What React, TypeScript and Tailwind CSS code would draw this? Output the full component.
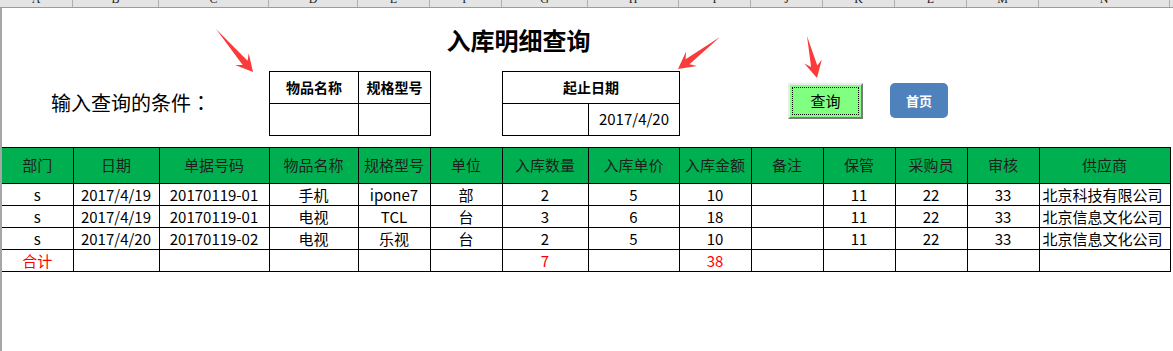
import React from 'react'

const LETTERS = ['A', 'B', 'C', 'D', 'E', 'F', 'G', 'H', 'I', 'J', 'K', 'L', 'M', 'N']

const HEADERS = ['部门', '日期', '单据号码', '物品名称', '规格型号', '单位', '入库数量', '入库单价', '入库金额', '备注', '保管', '采购员', '审核', '供应商']

const WIDTHS = [71, 86, 110, 89, 72, 72, 86, 91, 72, 72, 72, 72, 72, 131]

const ROWS = [
  ['s', '2017/4/19', '20170119-01', '手机', 'ipone7', '部', '2', '5', '10', '', '11', '22', '33', '北京科技有限公司'],
  ['s', '2017/4/19', '20170119-01', '电视', 'TCL', '台', '3', '6', '18', '', '11', '22', '33', '北京信息文化公司'],
  ['s', '2017/4/20', '20170119-02', '电视', '乐视', '台', '2', '5', '10', '', '11', '22', '33', '北京信息文化公司'],
]

const TOTAL = ['合计', '', '', '', '', '', '7', '', '38', '', '', '', '', '']

// red annotation arrow, tail -> tip
function Arrow({ x1, y1, x2, y2 }: { x1: number; y1: number; x2: number; y2: number }) {
  const dx = x2 - x1
  const dy = y2 - y1
  const len = Math.hypot(dx, dy)
  const ux = dx / len
  const uy = dy / len
  const nx = -uy
  const ny = ux
  const head = 17
  const neck = 12
  const hw = 9
  const sw = 3.2
  const jx = x2 - ux * neck
  const jy = y2 - uy * neck
  const wx = x2 - ux * head
  const wy = y2 - uy * head
  const pts = [
    [x1, y1],
    [jx + nx * sw, jy + ny * sw],
    [wx + nx * hw, wy + ny * hw],
    [x2, y2],
    [wx - nx * hw, wy - ny * hw],
    [jx - nx * sw, jy - ny * sw],
  ]
  return <polygon points={pts.map(p => p.map(v => v.toFixed(1)).join(',')).join(' ')} fill="#f93b3b" />
}

export default function App() {
  return (
    <div className="relative h-[351px] w-[1173px] overflow-hidden bg-white font-['Noto_Sans_CJK_SC',sans-serif] text-black">
      {/* column letters */}
      <div className="grid h-[8px] grid-cols-[73px_86px_110px_89px_72px_72px_86px_91px_72px_72px_72px_72px_72px_131px_3px] overflow-hidden border-b border-[#9c9c9c] bg-[#e4e4e4]">
        {LETTERS.map(l => (
          <div key={l} className="border-r border-[#b0b0b0] text-center">
            <div className="-mt-[7px] font-['Liberation_Serif',serif] text-[12px] leading-[12px] text-[#222]">{l}</div>
          </div>
        ))}
        <div />
      </div>

      <div className="h-[343px] border-l-2 border-[#a6a6a6]">
        {/* query area */}
        <div className="grid grid-cols-[71px_86px_110px_89px_72px_72px_86px_91px_72px_72px_72px_72px_72px_131px] grid-rows-[63px_32px_32px_12px]">
          <div className="col-span-4 col-start-5 row-start-1 flex items-center justify-center text-[24px] font-bold leading-none">
            入库明细查询
          </div>

          <div className="col-span-3 col-start-1 row-span-2 row-start-2 flex items-center pl-[49px] text-[20px] leading-none">
            输入查询的条件<span className="font-['Noto_Sans_CJK_TC',sans-serif]">：</span>
          </div>

          <div className="col-span-2 col-start-4 row-span-2 row-start-2">
            <table className="h-[65px] w-[162px] table-fixed border-collapse">
              <colgroup>
                <col className="w-[89px]" />
                <col className="w-[72px]" />
              </colgroup>
              <tbody>
                <tr>
                  <td className="h-[32px] border border-black text-center text-[14px] font-bold">物品名称</td>
                  <td className="border border-black text-center text-[14px] font-bold">规格型号</td>
                </tr>
                <tr>
                  <td className="h-[32px] border border-black" />
                  <td className="border border-black" />
                </tr>
              </tbody>
            </table>
          </div>

          <div className="col-span-2 col-start-7 row-span-2 row-start-2">
            <table className="h-[65px] w-[178px] table-fixed border-collapse">
              <colgroup>
                <col className="w-[86px]" />
                <col className="w-[91px]" />
              </colgroup>
              <tbody>
                <tr>
                  <td colSpan={2} className="h-[32px] border border-black text-center text-[14px] font-bold">起止日期</td>
                </tr>
                <tr>
                  <td className="h-[32px] border border-black" />
                  <td className="border border-black text-center text-[15px]">2017/4/20</td>
                </tr>
              </tbody>
            </table>
          </div>

          <div className="col-span-5 col-start-10 row-span-3 row-start-1 flex items-start gap-[27px] pl-[37px] pt-[75px]">
            <button className="relative flex h-[36px] w-[75px] items-center justify-center border-2 border-t-[#ececec] border-l-[#ececec] border-r-[#7a7a7a] border-b-[#7a7a7a] bg-[#80ff80] text-[15px]">
              <span className="absolute inset-[2px] border border-dotted border-black" />
              查询
            </button>
            <button className="flex h-[35px] w-[58px] items-center justify-center rounded-[5px] bg-[#4f81bd] text-[13px] font-bold text-white">
              首页
            </button>
          </div>
        </div>

        {/* detail table */}
        <table className="w-[1168px] table-fixed border-collapse text-[15px]">
          <colgroup>
            {WIDTHS.map((w, i) => (
              <col key={i} style={{ width: w }} />
            ))}
          </colgroup>
          <thead>
            <tr>
              {HEADERS.map((h, i) => (
                <th key={h} className={`h-[36px] border border-black bg-[#00b050] text-center font-normal text-[#1e1e1e] ${i === 0 ? 'border-l-0' : ''}`}>
                  {h}
                </th>
              ))}
            </tr>
          </thead>
          <tbody>
            {ROWS.map((row, r) => (
              <tr key={r}>
                {row.map((c, i) => (
                  <td
                    key={i}
                    className={`h-[22px] whitespace-nowrap border border-black p-0 leading-none ${i === 0 ? 'border-l-0' : ''} ${i === 13 ? 'pl-[3px] text-left' : 'text-center'}`}
                  >
                    {c}
                  </td>
                ))}
              </tr>
            ))}
            <tr>
              {TOTAL.map((c, i) => (
                <td key={i} className={`h-[22px] border border-black p-0 text-center leading-none text-[#ff0000] ${i === 0 ? 'border-l-0' : ''}`}>
                  {c}
                </td>
              ))}
            </tr>
          </tbody>
        </table>
      </div>

      {/* annotation arrows */}
      <svg className="pointer-events-none absolute inset-0" width="1173" height="351">
        <Arrow x1={216} y1={29} x2={253} y2={72} />
        <Arrow x1={720} y1={37} x2={678} y2={69} />
        <Arrow x1={807} y1={36} x2={817} y2={78} />
      </svg>
    </div>
  )
}
